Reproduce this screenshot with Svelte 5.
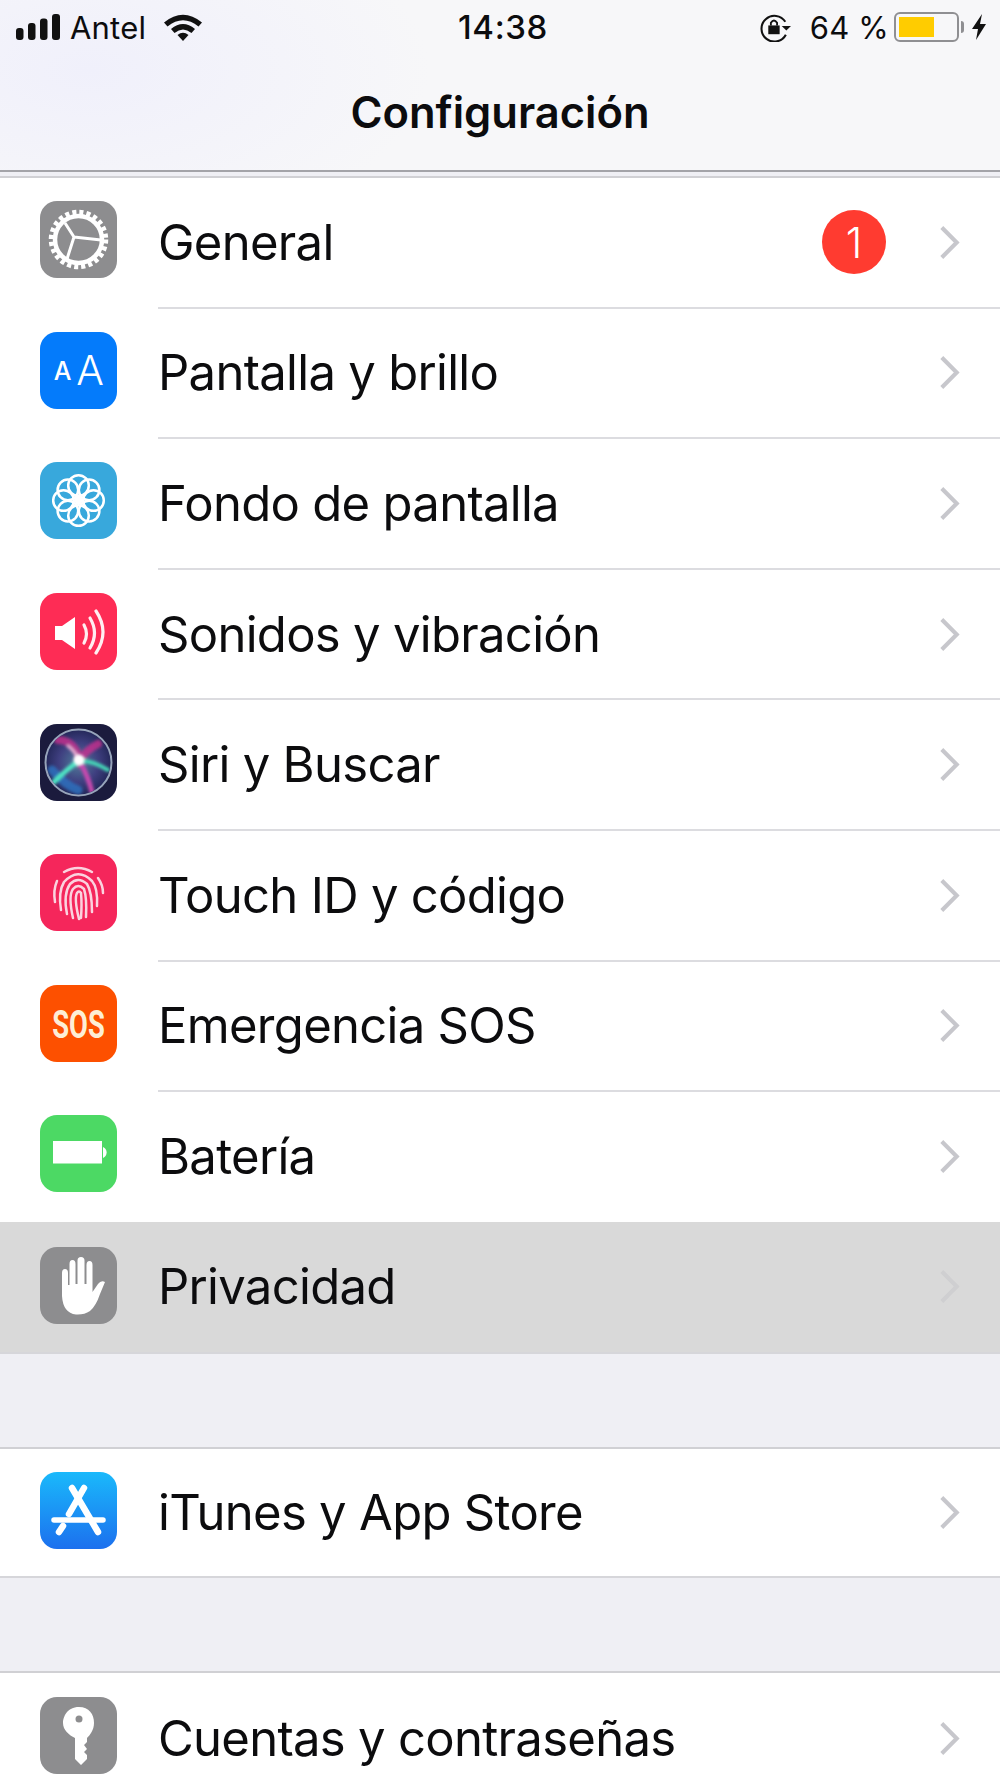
<script>
  const mainRows = [
    { id: 'gear', label: 'General', badge: 1 },
    { id: 'display', label: 'Pantalla y brillo' },
    { id: 'flower', label: 'Fondo de pantalla' },
    { id: 'sound', label: 'Sonidos y vibración' },
    { id: 'siri', label: 'Siri y Buscar' },
    { id: 'touch', label: 'Touch ID y código' },
    { id: 'sos', label: 'Emergencia SOS' },
    { id: 'battery', label: 'Batería', flush: true, short: true },
    { id: 'hand', label: 'Privacidad', active: true, flush: true }
  ];
  const storeRows = [{ id: 'store', label: 'iTunes y App Store', flush: true, compact: true }];
  const accountRows = [{ id: 'key', label: 'Cuentas y contraseñas', flush: true }];
  const petals = [0, 45, 90, 135, 180, 225, 270, 315];
</script>

{#snippet glyph(id)}
  <svg class="glyph" viewBox="0 0 77 77" aria-hidden="true">
    {#if id === 'gear'}
      <circle cx="38.5" cy="38.5" r="26.5" fill="none" stroke="#fff" stroke-width="6.5" stroke-dasharray="4 2.94" />
      <circle cx="38.5" cy="38.5" r="23.5" fill="none" stroke="#fff" stroke-width="4.5" />
      <path d="M34 36 L25 22 M34 36 L61 39 M34 36 L27 58" fill="none" stroke="#fff" stroke-width="3" />
    {:else if id === 'display'}
      <text x="22.5" y="48" class="aa small">A</text>
      <text x="50" y="53" class="aa big">A</text>
    {:else if id === 'flower'}
      {#each petals as a}
        <circle cx="38.5" cy="23.5" r="10.3" fill="none" stroke="#fff" stroke-width="2.5" transform="rotate({a} 38.5 38.5)" />
      {/each}
      <circle cx="38.5" cy="38.5" r="4.2" fill="#fff" />
    {:else if id === 'sound'}
      <path d="M15 33 H22 L35 24 V56 L22 47 H15 Z" fill="#fff" />
      <g fill="none" stroke="#fff" stroke-linecap="round" stroke-width="3.2" opacity=".92">
        <path d="M44 32 Q49 41 44 50" />
        <path d="M50 25 Q59 40 50 55" />
        <path d="M56 18 Q70 39 56 60" />
      </g>
    {:else if id === 'siri'}
      <defs>
        <radialGradient id="siriBg" cx=".5" cy=".5" r=".5">
          <stop offset="0" stop-color="#4f7d9a" />
          <stop offset=".6" stop-color="#3f3f80" />
          <stop offset="1" stop-color="#24285a" />
        </radialGradient>
        <filter id="soft" x="-30%" y="-30%" width="160%" height="160%"><feGaussianBlur stdDeviation="1.8" /></filter>
        <clipPath id="siriClip"><circle cx="38.5" cy="38.5" r="32" /></clipPath>
      </defs>
      <circle cx="38.5" cy="38.5" r="33" fill="url(#siriBg)" stroke="#97a4ba" stroke-width="2" />
      <g clip-path="url(#siriClip)">
        <g filter="url(#soft)" fill="none" stroke-linecap="round">
          <path d="M18 16 Q34 16 40 36 Q46 26 58 20" stroke="#c9318f" stroke-width="8" opacity=".8" />
          <path d="M12 46 Q26 62 38 66" stroke="#2c78c8" stroke-width="9" opacity=".75" />
          <path d="M40 38 Q48 52 52 68" stroke="#c54aae" stroke-width="5" />
          <path d="M12 60 Q28 44 39 37" stroke="#4fe6c4" stroke-width="5" />
          <path d="M39 37 Q52 36 68 46" stroke="#45d8b8" stroke-width="4" />
          <path d="M28 22 Q36 28 39 37" stroke="#eab0d6" stroke-width="3" />
        </g>
        <circle cx="39" cy="36" r="5.5" fill="#fff" filter="url(#soft)" />
      </g>
    {:else if id === 'touch'}
      <g fill="none" stroke="#fbd3df" stroke-linecap="round" stroke-width="2.5">
        <path d="M15 48 Q13 36 17 27" />
        <path d="M24 18 Q38 10 52 18" />
        <path d="M58 24 Q63 31 63 39" />
        <path d="M21 56 Q18 38 24 28 Q38 13 52 27 Q58 34 57 52" />
        <path d="M27 60 Q23 40 30 30 Q38 22 47 30 Q52 38 52 58" />
        <path d="M33 64 Q28 42 33 35 Q38 29 44 35 Q47 44 46 63" />
        <path d="M39 65 Q34 45 37 39 Q39 36 41 39 Q42 50 41 64" />
      </g>
    {:else if id === 'sos'}
      <text class="sos-text" transform="translate(38.5 53) scale(.72 1)">SOS</text>
    {:else if id === 'battery'}
      <rect x="13" y="26" width="49" height="22.500" fill="#fff" />
      <path d="M63 32 A6 6 0 0 1 63 43 Z" fill="#fff" />
    {:else if id === 'hand'}
      <path d="M22 26 Q22 22 25 22 Q28 22 28 26 V38 H29.500 V17 Q29.500 13 32.500 13 Q35.500 13 35.500 17 V37 H37.500 V13.500 Q37.500 10 41 10 Q44.500 10 44.500 13.500 V37 H46.500 V18 Q46.500 14 49.500 14 Q52.500 14 52.500 18 V45 L58 37 Q61 33 65 35 L60 47 Q56 59 50 64 Q44 68 36 67.500 Q23 66 22 49 Z" fill="#fff" />
    {:else if id === 'store'}
      <g fill="none" stroke="#fff" stroke-linecap="round" stroke-width="6.500">
        <path d="M32 16 L58 60" />
        <path d="M44 16 L29 42" />
        <path d="M23 54 L19 60" />
        <path d="M14 48 H63" stroke-width="5.500" />
      </g>
    {:else if id === 'key'}
      <path d="M39 10 C27 10 23 20 23 26 C23 33 29 38 35 41 V62 L41 68 L47 62 V58 L44 55 L47 52 L44 48 L47 45 V41 C50 38 54 33 54 26 C54 17 49 10 39 10 Z" fill="#fff" />
      <circle cx="39" cy="22" r="3.500" fill="#8d8d8f" />
    {/if}
  </svg>
{/snippet}

{#snippet row(r)}
  <div class="row" class:active={r.active} class:compact={r.compact} class:short={r.short}>
    <span class="icon {r.id}">{@render glyph(r.id)}</span>
    <div class="body" class:flush={r.flush}>
      <span class="label">{r.label}</span>
      {#if r.badge}<span class="badge">{r.badge}</span>{/if}
      <svg class="chevron" viewBox="0 0 20 34" aria-hidden="true"><path d="M2.500 2.500 L17 17 L2.500 31.500" /></svg>
    </div>
  </div>
{/snippet}

<div class="page">
  <header class="nav">
    <div class="status">
      <div class="left">
        <svg class="signal" viewBox="0 0 44 26" aria-hidden="true">
          <rect x="0" y="14" width="7.500" height="12" rx="3" />
          <rect x="12" y="9" width="7.500" height="17" rx="3" />
          <rect x="24" y="4.500" width="7.500" height="21.500" rx="3" />
          <rect x="36" y="0" width="8" height="26" rx="3" />
        </svg>
        <span>Antel</span>
        <svg class="wifi" viewBox="0 0 38 28" aria-hidden="true">
          <path d="M0 9.500 Q19 -6 38 9.500 L34.500 13.500 Q19 1 3.500 13.500 Z" />
          <path d="M7 16 Q19 6 31 16 L27.500 20 Q19 13 10.500 20 Z" />
          <path d="M13.500 22 Q19 17.500 24.500 22 L19 28 Z" />
        </svg>
      </div>
      <time>14:38</time>
      <div class="right">
        <svg class="rotate" viewBox="0 0 31 28" aria-hidden="true">
          <path d="M26 21 A12.500 12.500 0 1 1 25.500 8.500" fill="none" stroke="#111" stroke-width="2" />
          <path d="M22 12.500 H31 L26.500 17 Z" fill="#111" />
          <rect x="9" y="12" width="11" height="8.500" fill="#111" />
          <path d="M11.500 12 V9.500 Q14.500 5 17.500 9.500 V12" fill="none" stroke="#111" stroke-width="1.800" />
        </svg>
        <span class="pct">64 %</span>
        <div class="cell"><div class="level"></div></div>
        <span class="nub"></span>
        <svg class="bolt" viewBox="0 0 14 26" aria-hidden="true"><path d="M10 0 L0 15 H6 L4 26 L14 10 H8 Z" /></svg>
      </div>
    </div>
    <h1>Configuración</h1>
  </header>

  <section class="group first">
    {#each mainRows as r}{@render row(r)}{/each}
  </section>
  <section class="group spaced">
    {#each storeRows as r}{@render row(r)}{/each}
  </section>
  <section class="group spaced">
    {#each accountRows as r}{@render row(r)}{/each}
  </section>
</div>

<style>
  :global(body) {
    margin: 0;
    background: #efeff4;
  }
  .page {
    height: 1779px;
    overflow: hidden;
    background: #efeff4;
    color: #0c0c0e;
    font-family: Inter, "Liberation Sans", sans-serif;
  }
  .nav {
    height: 172px;
    box-sizing: border-box;
    border-bottom: 2px solid #a3a3a8;
    background:
      radial-gradient(ellipse 340px 170px at 90px 70px, #f0f0fb 0%, rgba(247, 247, 250, 0) 100%),
      #f7f7f9;
    display: flex;
    flex-direction: column;
  }
  .status {
    display: grid;
    grid-template-columns: 1fr auto 1fr;
    align-items: center;
    height: 54px;
    padding: 0 14px 0 16px;
    font-size: 31px;
    letter-spacing: 0.2px;
  }
  .left, .right {
    display: flex;
    align-items: center;
  }
  .right {
    justify-content: flex-end;
  }
  .left svg, .right svg {
    fill: #111;
  }
  .signal {
    width: 44px;
    height: 26px;
  }
  .left span {
    margin-left: 10px;
  }
  .wifi {
    width: 38px;
    height: 28px;
    margin-left: 18px;
  }
  time {
    font-size: 33px;
    font-weight: 500;
    letter-spacing: 0.6px;
    padding-left: 4px;
  }
  .rotate {
    width: 32px;
    height: 29px;
  }
  .pct {
    margin-left: 19px;
    letter-spacing: 0.2px;
  }
  .cell {
    width: 65px;
    height: 30px;
    margin-left: 5px;
    box-sizing: border-box;
    border: 2px solid #8f8f92;
    border-radius: 6px;
    padding: 3px;
  }
  .level {
    width: 35px;
    height: 100%;
    background: #ffcc00;
  }
  .nub {
    width: 3px;
    height: 12px;
    margin-left: 2px;
    background: #8f8f92;
    border-radius: 0 4px 4px 0;
  }
  .bolt {
    width: 14px;
    height: 26px;
    margin-left: 8px;
  }
  h1 {
    margin: 0;
    flex: 1;
    display: flex;
    align-items: center;
    justify-content: center;
    font-size: 43.5px;
    font-weight: 600;
    letter-spacing: 0;
  }
  .group {
    background: #fff;
    border-top: 2px solid #d0d0d4;
    border-bottom: 2px solid #d6d6da;
  }
  .first {
    margin-top: 4px;
  }
  .spaced {
    margin-top: 93px;
  }
  .row {
    height: 130.6px;
    display: flex;
    align-items: center;
    padding-left: 40px;
  }
  .row.short {
    height: 129.5px;
  }
  .row.compact {
    height: 127px;
  }
  .row.active {
    background: #d9d9d9;
  }
  .icon {
    flex: none;
    width: 77px;
    height: 77px;
    margin-bottom: 7px;
    border-radius: 17px;
    overflow: hidden;
  }
  .active .icon {
    margin-bottom: 3px;
  }
  .compact .icon {
    margin-bottom: 5px;
  }
  .glyph {
    display: block;
    width: 77px;
    height: 77px;
  }
  .gear, .hand, .key { background: #8d8d8f; }
  .display { background: #047bfb; }
  .flower { background: #38a8dc; }
  .sound { background: #fe2c55; }
  .siri { background: #1b1b3d; }
  .touch { background: #f5265b; }
  .sos { background: #fd5000; }
  .battery { background: #4cd964; }
  .store { background: linear-gradient(#1ab9fb, #1c70ee); }
  .aa {
    fill: #fff;
    text-anchor: middle;
    font-family: Inter, sans-serif;
    font-weight: 300;
  }
  .aa.small { font-size: 25px; font-weight: 500; }
  .aa.big { font-size: 41px; }
  .sos-text {
    fill: #fdeed6;
    text-anchor: middle;
    font-family: Roboto, sans-serif;
    font-weight: 700;
    font-size: 38px;
  }
  .body {
    flex: 1;
    align-self: stretch;
    margin-left: 41px;
    display: flex;
    align-items: center;
    border-bottom: 2px solid #dcdce0;
    padding-right: 40px;
    min-width: 0;
  }
  .body.flush {
    border-bottom: none;
  }
  .label {
    flex: 1;
    font-size: 49px;
    font-weight: 400;
    letter-spacing: -0.7px;
    white-space: nowrap;
  }
  .badge {
    width: 64px;
    height: 64px;
    margin-right: 53px;
    border-radius: 50%;
    background: #ff3b30;
    color: #fff;
    font-size: 42px;
    font-weight: 300;
    display: flex;
    align-items: center;
    justify-content: center;
  }
  .chevron {
    width: 21px;
    height: 35px;
    fill: none;
    stroke: #c7c7cc;
    stroke-width: 4;
  }
  .active .chevron {
    stroke: #cfcfd1;
  }
</style>
